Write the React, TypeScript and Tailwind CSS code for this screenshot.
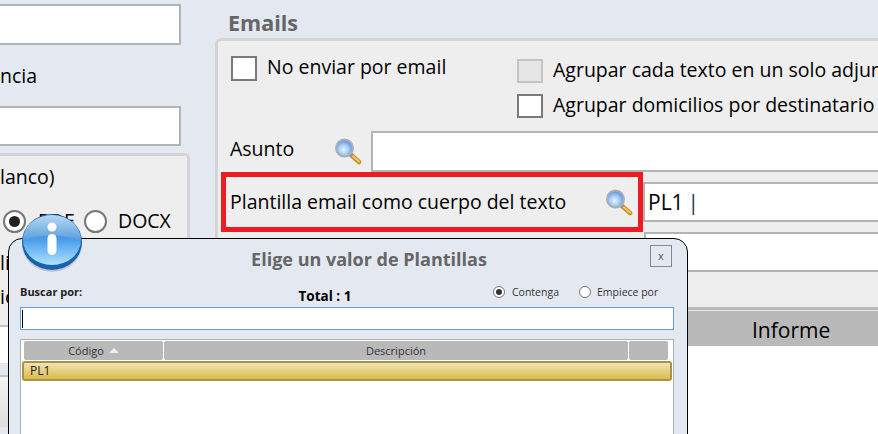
// App.tsx — Emails form with the "Elige un valor de Plantillas" lookup dialog on top
import React from 'react';

const Magnifier: React.FC<{ id: string }> = ({ id }) => (
  <svg width="28" height="27" viewBox="0 0 28 27" className="shrink-0">
    <defs>
      <radialGradient id={id} cx="0.45" cy="0.6" r="0.6">
        <stop offset="0%" stopColor="#eaf4ff" />
        <stop offset="55%" stopColor="#9cc4f2" />
        <stop offset="100%" stopColor="#4f86d8" />
      </radialGradient>
    </defs>
    <path d="M16 16 L25 24" stroke="#c98b2c" strokeWidth="4.5" strokeLinecap="round" />
    <path d="M18 17.5 L25 23.5" stroke="#f6c85a" strokeWidth="2" strokeLinecap="round" />
    <path d="M15 15 L18 18" stroke="#8d8d8d" strokeWidth="3.5" />
    <circle cx="10.5" cy="10" r="8.5" fill={`url(#${id})`} stroke="#a9afbb" strokeWidth="2" />
  </svg>
);

const InfoBadge = () => (
  <svg width="62" height="60" viewBox="0 0 62 60">
    <defs>
      <linearGradient id="infoBase" x1="0" y1="0" x2="0" y2="1">
        <stop offset="0%" stopColor="#2a7ccc" />
        <stop offset="50%" stopColor="#4a9eea" />
        <stop offset="100%" stopColor="#aee4ff" />
      </linearGradient>
      <linearGradient id="infoTop" x1="0" y1="0" x2="0" y2="1">
        <stop offset="0%" stopColor="#b8d8f2" />
        <stop offset="100%" stopColor="#5b9fdc" />
      </linearGradient>
    </defs>
    <ellipse cx="31" cy="31" rx="30" ry="28" fill="#8b9bb0" opacity="0.45" />
    <ellipse cx="31" cy="29" rx="30" ry="28" fill="#1b5fb0" />
    <ellipse cx="31" cy="27" rx="29" ry="25" fill="url(#infoBase)" />
    <path d="M2 27 A29 25 0 0 1 60 27 Q31 18 2 27 Z" fill="url(#infoTop)" />
    <circle cx="31" cy="14" r="4.5" fill="#fff" />
    <rect x="26.5" y="21" width="9" height="21" rx="4.5" fill="#fff" />
  </svg>
);

const Check: React.FC<{ disabled?: boolean; big?: boolean }> = ({ disabled, big }) => (
  <span
    className={
      disabled
        ? 'w-[26px] h-[24px] shrink-0 border-2 border-[#c4c4c4] bg-[#e6e6e6]'
        : big
          ? 'w-[26px] h-[25px] shrink-0 border-2 border-[#7a7a7a] bg-white'
          : 'w-[26px] h-[24px] shrink-0 border-2 border-[#7a7a7a] bg-white'
    }
  />
);

const Lookup = () => (
  <div className="absolute left-[8px] top-[238px] w-[680px] h-[210px] bg-[#e4e8f1] border border-black rounded-t-[14px] px-[11px] text-[#222]">
    <div className="flex items-start h-[27px] pt-[6px]">
      <div className="flex-1 pl-[68px] text-center text-[18px] leading-[28px] font-bold text-[#666] whitespace-nowrap">
        Elige un valor de Plantillas
      </div>
      <div className="w-[22px] h-[22px] mr-[4px] border border-[#888] flex items-center justify-center text-[11px] text-[#555]">
        x
      </div>
    </div>
    <div className="relative flex items-start h-[41px] pt-[19px]">
      <span className="w-[272px] text-[11px] leading-[14px] font-bold">Buscar por:</span>
      <span className="w-[66px] mt-[3px] text-center text-[13.5px] leading-[16px] font-bold whitespace-nowrap text-black">Total : 1</span>
      <div className="flex items-center ml-[135px] text-[10.5px] leading-[14px] text-[#333]">
        <span className="w-[12px] h-[12px] rounded-full border border-[#777] bg-white flex items-center justify-center">
          <span className="w-[6px] h-[6px] rounded-full bg-[#333]" />
        </span>
        <span className="ml-[7px] w-[67px]">Contenga</span>
        <span className="w-[12px] h-[12px] rounded-full border border-[#777] bg-white" />
        <span className="ml-[6px] whitespace-nowrap">Empiece por</span>
      </div>
    </div>
    <div className="h-[23px] w-[654px] border border-[#6a9fdc] bg-white pl-[1px] flex items-center">
      <span className="w-px h-[18px] bg-black" />
    </div>
    <div className="mt-[9px] w-[654px] h-[120px] bg-white border border-[#b0b0b0] pt-[1px] px-[1px]">
      <div className="flex gap-px h-[19px] pl-[2px] text-[11px] leading-[19px] text-[#333]">
        <div className="w-[139px] bg-[#b9b9b9] rounded-[2px] flex items-center justify-center gap-[5px]">
          Código
          <span className="w-0 h-0 border-x-[5px] border-x-transparent border-b-[5px] border-b-[#eee]" />
        </div>
        <div className="w-[464px] bg-[#b9b9b9] rounded-[2px] text-center">Descripción</div>
        <div className="w-[39px] bg-[#b9b9b9] rounded-[2px]" />
      </div>
      <div className="mt-px h-[20px] w-[650px] border-2 border-[#a69544] rounded-[3px] bg-gradient-to-b from-[#f0e2b4] to-[#dcbb48] pl-[6px] text-[12px] leading-[16px] text-[#222]">
        PL1
      </div>
    </div>
  </div>
);

export default function App() {
  return (
    <div
      className="relative w-[878px] h-[434px] overflow-hidden bg-[#e4e8f1] flex text-black"
      style={{ fontFamily: '"Open Sans", "Noto Sans", sans-serif' }}
    >
      {/* Left column, cut off by the window */}
      <div className="w-[215px] shrink-0 text-[19.5px]">
        <div className="mt-[4px] w-[181px] h-[41px] bg-white border-2 border-l-0 border-[#b4b4b4]" />
        <div className="h-[61px] pt-[18px] leading-[26px]">ncia</div>
        <div className="w-[181px] h-[40px] bg-white border-2 border-l-0 border-[#b4b4b4]" />
        <div className="mt-[7px] w-[190px] h-[172px] bg-[#eeeeee] border-[3px] border-l-0 border-b-0 border-[#d5d5d5] rounded-tr-[5px]">
          <div className="pt-[8px] leading-[26px]">lanco)</div>
          <div className="flex items-center h-[24px] mt-[19px]">
            <span className="ml-[3px] w-[23px] h-[23px] rounded-full border-2 border-[#777] bg-white flex items-center justify-center">
              <span className="w-[11px] h-[11px] rounded-full bg-[#222]" />
            </span>
            <span className="ml-[12px] w-[46px]">PDF</span>
            <span className="w-[23px] h-[23px] rounded-full border-2 border-[#777] bg-white" />
            <span className="ml-[11px]">DOCX</span>
          </div>
          <div className="mt-[16px] h-[28px] leading-[28px]">li</div>
          <div className="mt-[6px] h-[28px] leading-[28px]">ió</div>
        </div>
        <div className="h-[38px] w-[8px] bg-white border-t-2 border-[#c4c4c4]" />
        <div className="mt-[12px] h-[52px] w-[8px] bg-gradient-to-b from-[#f4f4f4] to-[#dedede] border-t-2 border-[#c4c4c4]" />
      </div>

      {/* Right column */}
      <div className="w-[700px] shrink-0 text-[19.5px]">
        <div className="h-[38px] pl-[13px] pt-[8px] text-[21.5px] leading-[30px] font-bold text-[#666]">Emails</div>
        <div className="h-[272px] bg-[#eeeeee] border-[3px] border-r-0 border-[#d5d5d5] border-b-[#b9b9b9] rounded-tl-[6px]">
          <div className="h-[90px] flex">
            <div className="w-[299px] pl-[13px] pt-[15px] flex items-start gap-[10px]">
              <Check big />
              <span className="leading-[22px] whitespace-nowrap">No enviar por email</span>
            </div>
            <div className="pt-[18px] flex flex-col gap-[11px]">
              <div className="flex items-center gap-[10px] h-[24px] whitespace-nowrap">
                <Check disabled />
                <span className="mt-[-2px]">Agrupar cada texto en un solo adjunto</span>
              </div>
              <div className="flex items-center gap-[10px] h-[24px] whitespace-nowrap">
                <Check />
                <span className="mt-[-2px]">Agrupar domicilios por destinatario</span>
              </div>
            </div>
          </div>
          <div className="h-[41px] flex items-center pl-[12px]">
            <span className="w-[104px] mt-[-5px]">Asunto</span>
            <Magnifier id="lensA" />
            <div className="ml-[9px] flex-1 h-[41px] bg-white border-2 border-r-0 border-[#b4b4b4]" />
          </div>
          <div className="h-[60px] flex items-center pl-[3px]">
            <div className="w-[422px] h-[60px] shrink-0 border-[5px] border-[#ed1c24] flex items-center pl-[4px] pr-[5px] justify-between">
              <span className="whitespace-nowrap">Plantilla email como cuerpo del texto</span>
              <Magnifier id="lensB" />
            </div>
            <div className="flex-1 h-[40px] bg-white border-2 border-r-0 border-[#b4b4b4] pl-[3px] text-[21px] leading-[36px]">
              PL1<span className="ml-[4px] text-[#14304f]">|</span>
            </div>
          </div>
          <div className="h-[40px] pl-[426px]">
            <div className="h-[40px] bg-white border-2 border-r-0 border-[#b4b4b4]" />
          </div>
        </div>
        <div className="mt-px h-[35px] ml-[429px] bg-[#b9b9b9] text-[21px] leading-[38px] pl-[108px]">
          Informe
        </div>
        <div className="h-[90px] bg-white" />
      </div>

      <Lookup />
      <div className="absolute left-[21px] top-[213px]">
        <InfoBadge />
      </div>
    </div>
  );
}
